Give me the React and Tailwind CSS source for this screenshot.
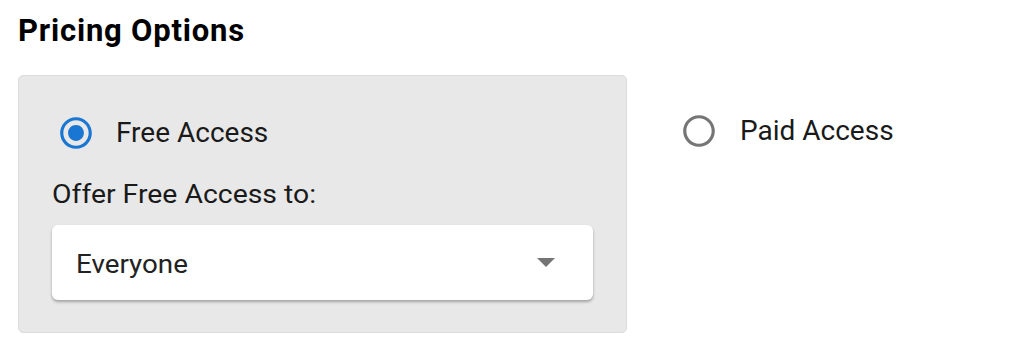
import React from "react";

function RadioChecked() {
  return (
    <svg width="38" height="38" viewBox="0 0 24 24" className="shrink-0" fill="#1976d2">
      <path d="M12 7c-2.76 0-5 2.24-5 5s2.24 5 5 5 5-2.24 5-5-2.24-5-5-5zm0-5C6.48 2 2 6.48 2 12s4.48 10 10 10 10-4.48 10-10S17.52 2 12 2zm0 18c-4.42 0-8-3.58-8-8s3.58-8 8-8 8 3.58 8 8-3.58 8-8 8z" />
    </svg>
  );
}

function RadioUnchecked() {
  return (
    <svg width="38" height="38" viewBox="0 0 24 24" className="shrink-0" fill="#757575">
      <path d="M12 2C6.48 2 2 6.48 2 12s4.48 10 10 10 10-4.48 10-10S17.52 2 12 2zm0 18c-4.42 0-8-3.58-8-8s3.58-8 8-8 8 3.58 8 8-3.58 8-8 8z" />
    </svg>
  );
}

export default function App() {
  return (
    <div className="font-['Roboto',sans-serif] pl-[18px] pt-[13px] bg-white w-[1024px] h-[358px]">
      <h1 className="text-[31px] leading-[36px] font-bold tracking-[0.8px] text-black">Pricing Options</h1>
      <div className="mt-[26px] flex items-start">
        <div className="w-[609px] h-[258px] rounded-[5px] border border-[#dcdcdc] bg-[#e8e8e8] pt-[37px] pl-[33px]">
          <div className="flex items-center h-[39px]">
            <div className="ml-[5px]"><RadioChecked /></div>
            <span className="ml-[21px] text-[28px] leading-[32px] text-[#1a1a1a]">Free Access</span>
          </div>
          <div className="mt-[29px] text-[25px] leading-[28px] text-[#1a1a1a] origin-left scale-x-[1.135]">Offer Free Access to:</div>
          <div className="mt-[16px] w-[541px] h-[75px] bg-white rounded-[6px] shadow-[0_2px_3px_rgba(0,0,0,0.3)] flex items-center justify-between pl-[24px] pr-[38px]">
            <span className="text-[25px] leading-[30px] text-[#222] origin-left scale-x-[1.11] translate-y-[2px]">Everyone</span>
            <svg width="18" height="9" viewBox="0 0 18 9" fill="#757575">
              <path d="M0 0h18L9 9z" />
            </svg>
          </div>
        </div>
        <div className="ml-[53px] mt-[36px] flex items-center h-[39px]">
          <RadioUnchecked />
          <span className="ml-[22px] text-[28px] leading-[32px] text-[#1a1a1a]">Paid Access</span>
        </div>
      </div>
    </div>
  );
}
